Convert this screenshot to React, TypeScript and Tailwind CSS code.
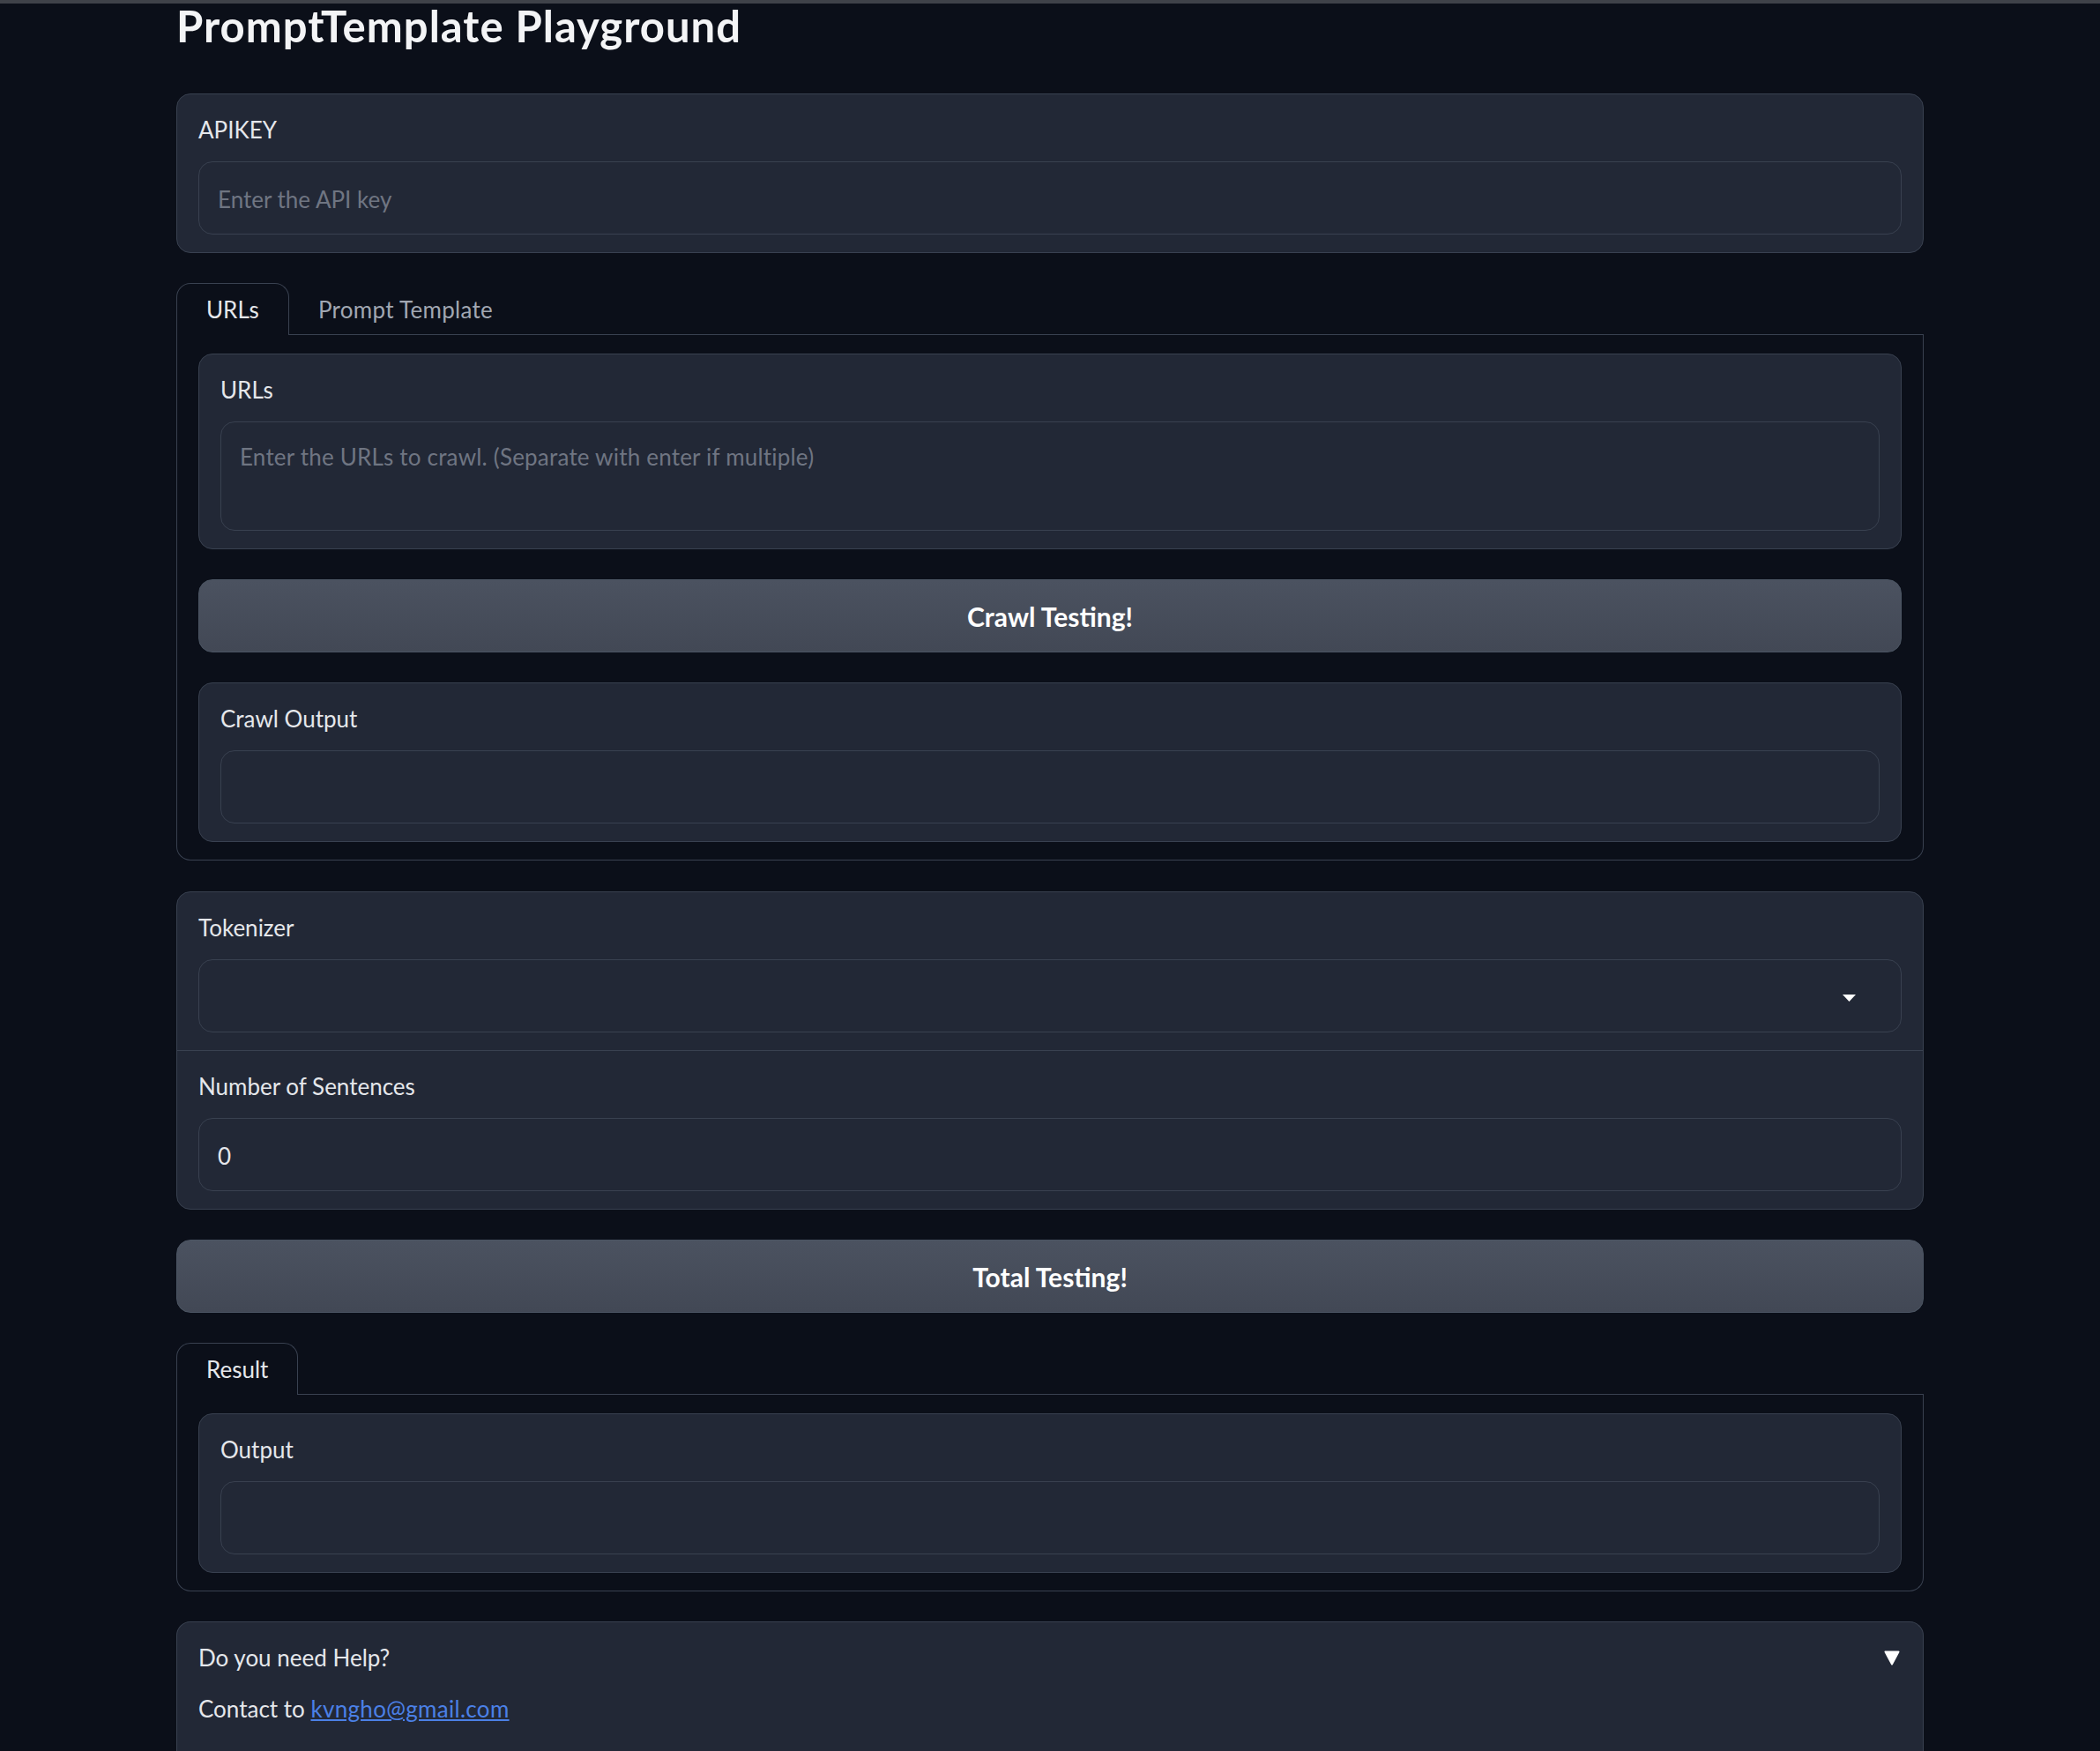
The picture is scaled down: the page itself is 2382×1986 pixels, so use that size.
import { ReactNode } from 'react'

function Block({ label, children }: { label: string; children: ReactNode }) {
  return (
    <div className="px-6 pt-[22px] pb-[20px]">
      <div className="text-[26px] leading-[36px] text-[#e5e7eb]">{label}</div>
      <div className="mt-[18px]">{children}</div>
    </div>
  )
}

function Card({ label, children }: { label: string; children: ReactNode }) {
  return (
    <div className="rounded-2xl border border-[#394150] bg-[#222836]">
      <Block label={label}>{children}</Block>
    </div>
  )
}

function TextInput({ placeholder, value }: { placeholder?: string; value?: string }) {
  return (
    <input
      readOnly
      value={value ?? ''}
      placeholder={placeholder}
      className="block h-[83px] w-full rounded-2xl border border-[#394150] bg-[#222836] px-[21px] pt-[2px] text-[26px] leading-[36px] text-[#e5e7eb] outline-none placeholder:text-[#6f7582]"
    />
  )
}

function BigButton({ children }: { children: ReactNode }) {
  return (
    <button className="flex h-[83px] w-full items-center justify-center rounded-2xl border border-[#4b5563] bg-gradient-to-b from-[#4b5260] to-[#424855] pt-[2px] text-[30px] font-bold text-white">
      {children}
    </button>
  )
}

function Tabs({ tabs, children }: { tabs: string[]; children: ReactNode }) {
  const [active, ...rest] = tabs
  return (
    <div>
      <div className="flex text-[26px] leading-[36px]">
        <div className="h-[59px] rounded-t-2xl border border-b-0 border-[#394150] px-[33px] pt-[11px] text-[#e5e7eb]">
          {active}
        </div>
        <div className="flex h-[59px] flex-1 border-b border-[#394150]">
          {rest.map((t) => (
            <div key={t} className="pl-[33px] pt-[12px] tracking-[0.3px] text-[#a1a7b2]">
              {t}
            </div>
          ))}
        </div>
      </div>
      <div className="flex flex-col gap-[34px] rounded-b-2xl border border-t-0 border-[#394150] px-6 pt-[21px] pb-[20px]">
        {children}
      </div>
    </div>
  )
}

export default function App() {
  return (
    <div className="h-[1986px] overflow-hidden bg-[#0b0f19] font-['Lato',sans-serif]">
      <div className="h-[4px] bg-[#3f4249]" />
      <div className="mx-auto w-[1982px]">
        <h1 className="text-[49px] font-bold leading-[50px] tracking-[1px] text-[#f3f4f6]">
          PromptTemplate Playground
        </h1>

        <div className="mt-[52px] flex flex-col gap-[34px]">
          <Card label="APIKEY">
            <TextInput placeholder="Enter the API key" />
          </Card>

          <Tabs tabs={['URLs', 'Prompt Template']}>
            <Card label="URLs">
              <textarea
                readOnly
                placeholder="Enter the URLs to crawl. (Separate with enter if multiple)"
                className="block h-[124px] w-full resize-none rounded-2xl border border-[#394150] bg-[#222836] px-[21px] pt-[21px] text-[26px] leading-[36px] tracking-[0.2px] text-[#e5e7eb] outline-none placeholder:text-[#6f7582]"
              />
            </Card>
            <BigButton>Crawl Testing!</BigButton>
            <Card label="Crawl Output">
              <TextInput />
            </Card>
          </Tabs>

          <div className="mt-px divide-y divide-[#394150] rounded-2xl border border-[#394150] bg-[#222836]">
            <Block label="Tokenizer">
              <div className="flex h-[83px] items-center justify-end rounded-2xl border border-[#394150] bg-[#222836] pr-[51px]">
                <svg width="15" height="8" viewBox="0 0 15 8" className="mt-[4px]">
                  <path d="M0 0h15L7.5 8z" fill="#ffffff" />
                </svg>
              </div>
            </Block>
            <Block label="Number of Sentences">
              <TextInput value="0" />
            </Block>
          </div>

          <BigButton>Total Testing!</BigButton>

          <Tabs tabs={['Result']}>
            <Card label="Output">
              <TextInput />
            </Card>
          </Tabs>

          <div className="h-[220px] rounded-t-2xl border border-b-0 border-[#394150] bg-[#222836] px-6 pt-[22px] text-[26px] leading-[36px] text-[#e5e7eb]">
            <div className="flex items-center justify-between">
              <span>Do you need Help?</span>
              <svg width="18" height="17" viewBox="0 0 18 17" className="mr-[2px]">
                <path d="M1.5 1.5h15L9 15.5z" fill="#ffffff" stroke="#ffffff" strokeWidth="2" strokeLinejoin="round" />
              </svg>
            </div>
            <div className="mt-[22px]">
              Contact to{' '}
              <a href="#" className="tracking-[0.3px] text-[#4b80e6] underline">
                kvngho@gmail.com
              </a>
            </div>
          </div>
        </div>
      </div>
    </div>
  )
}
